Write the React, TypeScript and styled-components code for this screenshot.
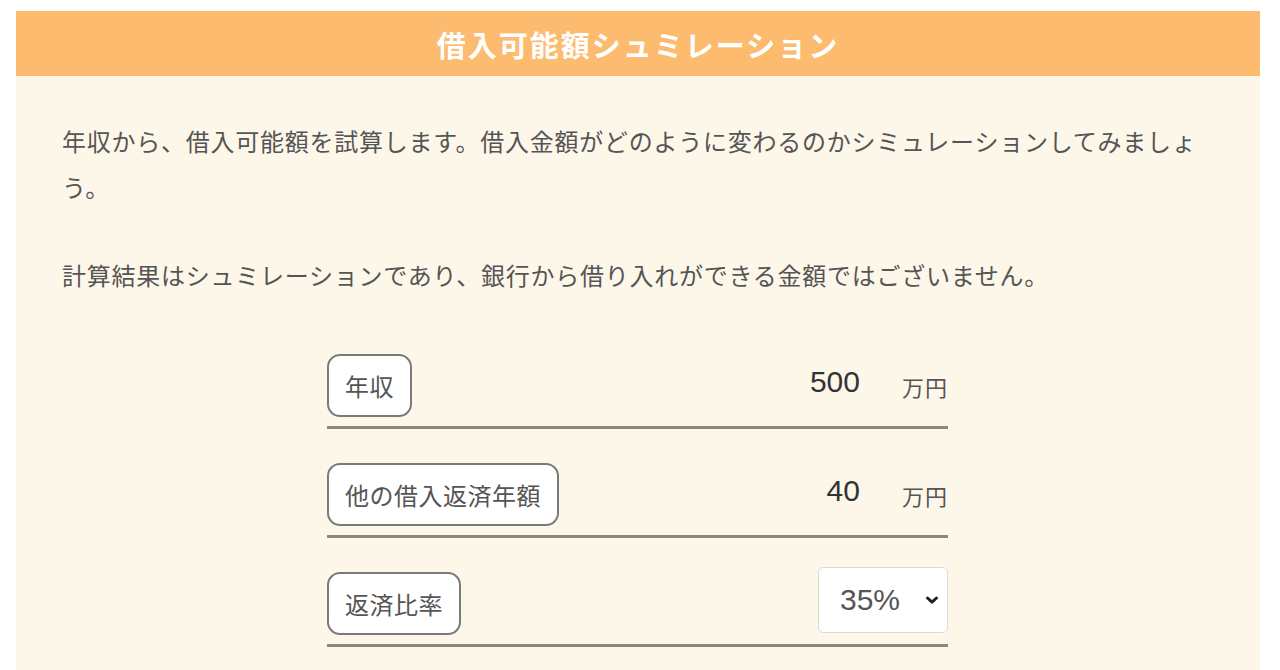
import styled, { createGlobalStyle } from 'styled-components'

const GlobalStyle = createGlobalStyle`
  html, body {
    margin: 0;
    padding: 0;
    background: #ffffff;
  }
  body {
    font-family: "Liberation Sans", "Noto Sans CJK JP", sans-serif;
    color: #555555;
  }
`

interface RowData {
  label: string
  value: string
}

const rows: RowData[] = [
  { label: '年収', value: '500' },
  { label: '他の借入返済年額', value: '40' }
]

const ChevronIcon = () => (
  <svg width="14" height="10" viewBox="0 0 14 10" aria-hidden="true">
    <path d="M2.5 3 L7 7.2 L11.5 3" fill="none" stroke="#222" strokeWidth="3" strokeLinecap="round" strokeLinejoin="round" />
  </svg>
)

export default function App() {
  return (
    <>
      <GlobalStyle />
      <Page>
        <Card>
          <Header>借入可能額シュミレーション</Header>
          <Body>
            <Lead>
              年収から、借入可能額を試算します。借入金額がどのように変わるのかシミュレーションしてみましょう。
            </Lead>
            <Lead>計算結果はシュミレーションであり、銀行から借り入れができる金額ではございません。</Lead>
            <Form>
              {rows.map((row) => (
                <Row key={row.label}>
                  <Label>{row.label}</Label>
                  <ValueGroup>
                    <ValueInput defaultValue={row.value} />
                    <Unit>万円</Unit>
                  </ValueGroup>
                </Row>
              ))}
              <Row>
                <Label>返済比率</Label>
                <SelectWrap>
                  <Select defaultValue="35">
                    <option value="25">25%</option>
                    <option value="30">30%</option>
                    <option value="35">35%</option>
                    <option value="40">40%</option>
                  </Select>
                  <Chevron>
                    <ChevronIcon />
                  </Chevron>
                </SelectWrap>
              </Row>
            </Form>
          </Body>
        </Card>
      </Page>
    </>
  )
}

const Page = styled.div`
  padding: 11px 20px 0 16px;
`

const Card = styled.section`
  display: flex;
  flex-direction: column;
  background: #fdf7ea;
  min-height: 659px;
`

const Header = styled.h1`
  margin: 0;
  height: 65px;
  display: flex;
  align-items: center;
  justify-content: center;
  background: #fcbb6f;
  color: #ffffff;
  font-family: "Noto Sans CJK JP", sans-serif;
  font-size: 29px;
  font-weight: 700;
  letter-spacing: 2px;
`

const Body = styled.div`
  padding: 42px 48px 0 46px;
`

const Lead = styled.p`
  margin: 0 0 42px;
  max-width: 1150px;
  font-family: "Noto Sans CJK JP", sans-serif;
  font-size: 24px;
  line-height: 46px;
  letter-spacing: 0.75px;
  color: #555555;
`

const Form = styled.div`
  width: 621px;
  margin: 56px auto 0 265px;
  display: flex;
  flex-direction: column;
  gap: 34px;
`

const Row = styled.div`
  display: flex;
  align-items: center;
  justify-content: space-between;
  padding-bottom: 9px;
  border-bottom: 3px solid #928676;
`

const Label = styled.div`
  box-sizing: border-box;
  height: 63px;
  display: flex;
  align-items: center;
  padding: 0 16px;
  background: #ffffff;
  border: 2px solid #7a7a7a;
  border-radius: 13px;
  font-family: "Noto Sans CJK JP", sans-serif;
  font-size: 24px;
  letter-spacing: 0.5px;
  color: #555555;
`

const ValueGroup = styled.div`
  display: flex;
  align-items: center;
  gap: 42px;
`

const ValueInput = styled.input`
  width: 120px;
  padding: 0;
  margin: 0 0 8px;
  border: none;
  background: transparent;
  text-align: right;
  font-family: "Liberation Sans", sans-serif;
  font-size: 30px;
  color: #333333;
  outline: none;
`

const Unit = styled.span`
  font-family: "Noto Sans CJK JP", sans-serif;
  font-size: 22px;
  letter-spacing: 1px;
  color: #555555;
`

const SelectWrap = styled.div`
  position: relative;
  margin-top: -8px;
`

const Select = styled.select`
  appearance: none;
  box-sizing: border-box;
  width: 130px;
  height: 66px;
  padding: 0 0 0 21px;
  background: #ffffff;
  border: 1px solid #dedbd6;
  border-radius: 5px;
  font-family: "Liberation Sans", sans-serif;
  font-size: 30px;
  color: #555555;
  outline: none;
`

const Chevron = styled.span`
  position: absolute;
  right: 9px;
  top: 50%;
  transform: translateY(-50%);
  display: flex;
  pointer-events: none;
`
